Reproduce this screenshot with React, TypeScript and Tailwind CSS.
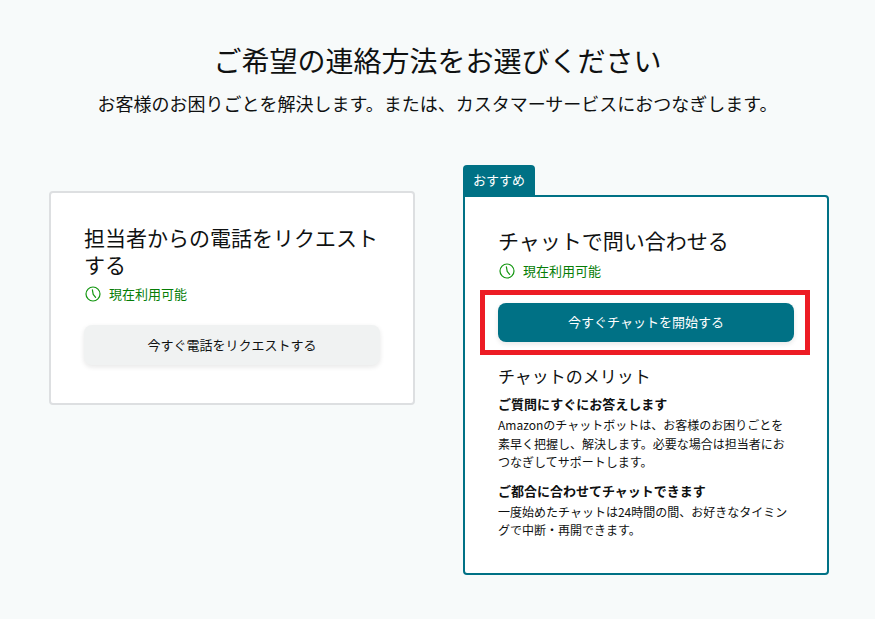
const fontStack = "font-['Meiryo','Noto_Sans_CJK_JP','Noto_Sans',sans-serif]";

function ClockIcon() {
  return (
    <svg width="16" height="16" viewBox="0 0 16 16" fill="none" stroke="#12960f" strokeWidth="1.2" className="shrink-0">
      <circle cx="8" cy="8" r="7" />
      <path d="M7.4 3.8 L8.2 8.4 L10.6 11.4" strokeLinecap="round" strokeLinejoin="round" />
    </svg>
  );
}

function Availability() {
  return (
    <div className="ml-[1px] flex h-[18px] items-center gap-[8px] text-[13px] text-[#067d06]">
      <ClockIcon />
      <span>現在利用可能</span>
    </div>
  );
}

export default function App() {
  return (
    <main className={`h-[619px] w-[875px] overflow-hidden bg-[#f7fafa] text-[#0f1111] ${fontStack}`}>
      <header className="flex flex-col items-center pt-[39px]">
        <h1 className="text-[28px] leading-[42px] font-normal">ご希望の連絡方法をお選びください</h1>
        <p className="mt-[9px] text-[18px] leading-[26px]">お客様のお困りごとを解決します。または、カスタマーサービスにおつなぎします。</p>
      </header>

      <div className="mt-[49px] flex items-start gap-[48px] pl-[49px]">
        <section className="mt-[26px] h-[214px] w-[366px] rounded-[4px] border-2 border-[#dddfe1] bg-white px-[33px] pt-[31px]">
          <h2 className="text-[21px] leading-[27px] font-normal">担当者からの電話をリクエストする</h2>
          <div className="mt-[7px]">
            <Availability />
          </div>
          <button className="mt-[22px] h-[40px] w-full rounded-[8px] bg-[#f0f2f2] pb-[1px] text-[13px] shadow-[0_2px_5px_rgba(15,17,17,0.1)]">
            今すぐ電話をリクエストする
          </button>
        </section>

        <div className="w-[366px]">
          <div className="flex h-[30px] w-[72px] items-center justify-center rounded-t-[4px] bg-[#007185] text-[13px] text-white">
            おすすめ
          </div>
          <section className="relative h-[380px] rounded-[4px] rounded-tl-none border-2 border-[#007185] bg-white px-[33px] pt-[30px]">
            <h2 className="text-[21px] leading-[27px] font-normal">チャットで問い合わせる</h2>
            <div className="mt-[8px]">
              <Availability />
            </div>
            <button className="mt-[23px] h-[39px] w-full rounded-[8px] bg-[#007185] pb-[1px] text-[13px] text-white shadow-[0_2px_5px_rgba(15,17,17,0.1)]">
              今すぐチャットを開始する
            </button>
            <h3 className="mt-[22px] text-[17px] leading-[24px] font-normal">チャットのメリット</h3>
            <h4 className="mt-[7px] text-[13px] leading-[18px] font-bold">ご質問にすぐにお答えします</h4>
            <p className="mt-[3px] text-[12px] leading-[18.5px]">
              Amazonのチャットボットは、お客様のお困りごとを素早く把握し、解決します。必要な場合は担当者におつなぎしてサポートします。
            </p>
            <h4 className="mt-[10px] text-[13px] leading-[18px] font-bold">ご都合に合わせてチャットできます</h4>
            <p className="mt-[3px] text-[12px] leading-[18.5px]">
              一度始めたチャットは24時間の間、お好きなタイミングで中断・再開できます。
            </p>
            <div className="absolute top-[93px] left-[15px] h-[65px] w-[330px] border-[5px] border-[#ed1c24]" />
          </section>
        </div>
      </div>
    </main>
  );
}
